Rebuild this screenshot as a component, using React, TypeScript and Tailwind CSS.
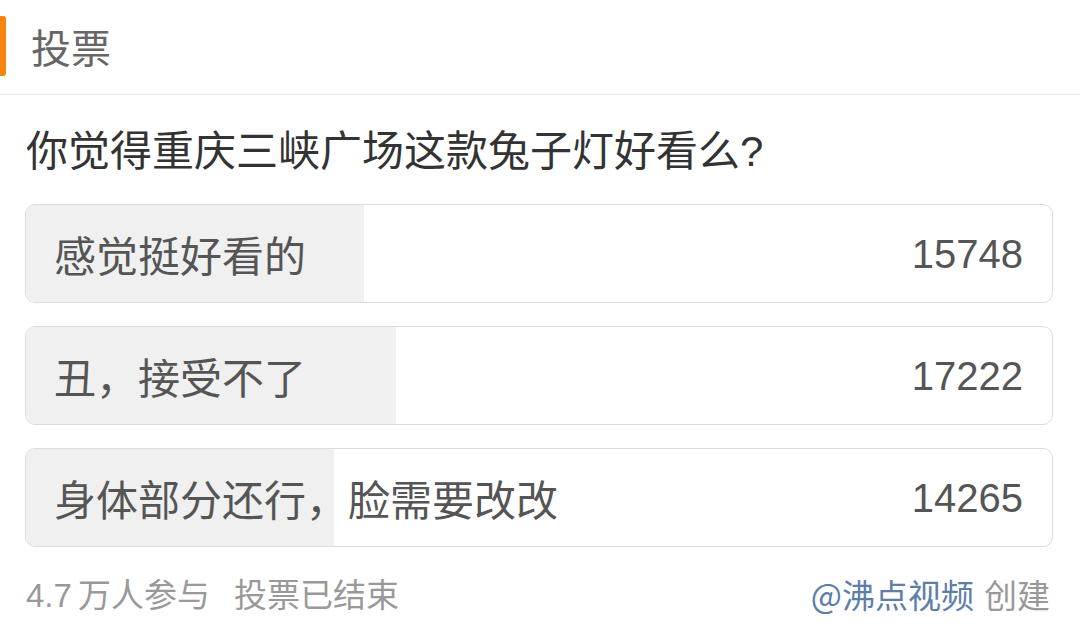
import React from "react";

const options = [
  { label: "感觉挺好看的", count: 15748, fill: 338 },
  { label: "丑，接受不了", count: 17222, fill: 370 },
  { label: "身体部分还行，脸需要改改", count: 14265, fill: 308 },
];

const latin = '"Liberation Sans", "Noto Sans CJK SC", sans-serif';

export default function App() {
  return (
    <div
      className="w-[1080px] h-[639px] bg-white overflow-hidden"
      style={{ fontFamily: '"Noto Sans CJK SC", "Noto Sans", sans-serif' }}
    >
      <div className="relative h-[95px] border-b border-[#ececec] flex items-center">
        <div className="absolute left-0 top-[16px] w-[6px] h-[60px] bg-[#f5850f] rounded-r-[3px]" />
        <div className="pl-[31px] text-[40px] leading-none text-[#666] pb-[2px]">投票</div>
      </div>
      <div className="pl-[26px] pt-[28px] text-[42px] leading-[50px] text-[#333]">
        你觉得重庆三峡广场这款兔子灯好看么
        <span style={{ fontFamily: latin }}>?</span>
      </div>
      <div className="ml-[25px] w-[1028px] pt-[27px] flex flex-col gap-[23px]">
        {options.map((o) => (
          <div
            key={o.label}
            className="relative h-[99px] border border-[#dcdcdc] rounded-[10px] overflow-hidden bg-white flex items-center"
          >
            <div
              className="absolute left-0 top-0 bottom-0 bg-[#f0f0f0]"
              style={{ width: o.fill }}
            />
            <div className="relative flex-1 pl-[28px] text-[42px] leading-none text-[#555]">
              {o.label}
            </div>
            <div
              className="relative pr-[29px] text-[40px] leading-none text-[#555]"
              style={{ fontFamily: latin }}
            >
              {o.count}
            </div>
          </div>
        ))}
      </div>
      <div className="flex items-center justify-between pl-[26px] pr-[30px] pt-[30px] text-[33px] leading-none text-[#999]">
        <div className="flex gap-[24px]">
          <span>
            <span style={{ fontFamily: latin }}>4.7</span>
            <span className="ml-[6px]">万人参与</span>
          </span>
          <span>投票已结束</span>
        </div>
        <div>
          <span className="text-[#5d7ea8]">@沸点视频</span>
          <span className="ml-[10px]">创建</span>
        </div>
      </div>
    </div>
  );
}
